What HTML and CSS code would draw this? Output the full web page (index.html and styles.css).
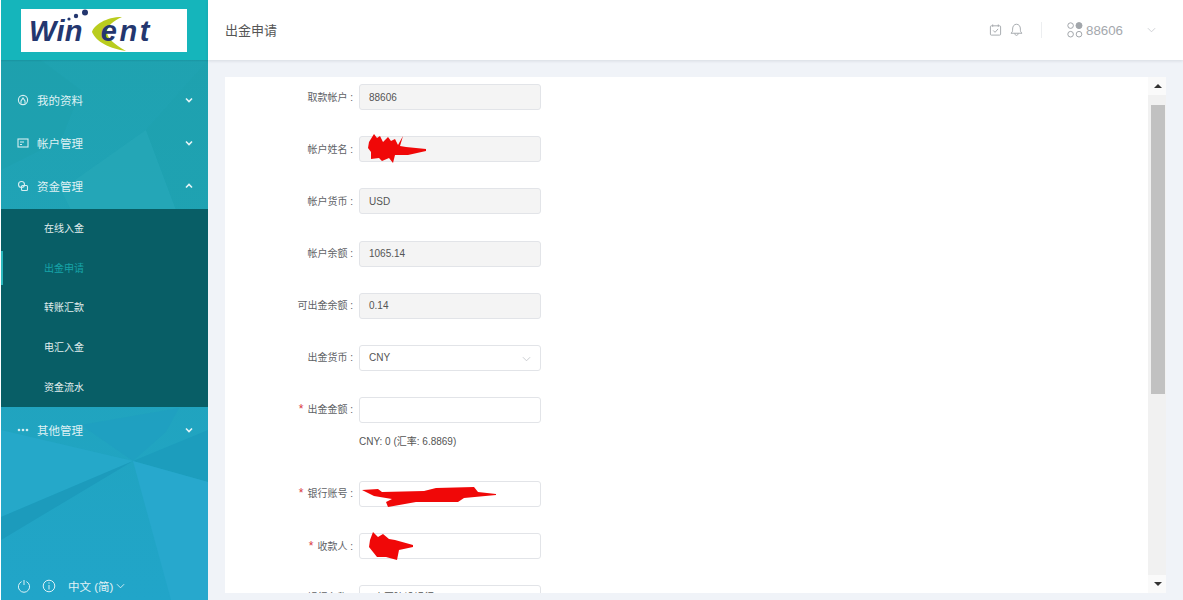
FILE: index.html
```html
<!DOCTYPE html>
<html lang="zh-CN">
<head>
<meta charset="utf-8">
<title>出金申请</title>
<link rel="stylesheet" href="styles.css">
</head>
<body>
<div class="app">
  <aside class="sidebar">
    <svg class="facets" viewBox="0 0 207 600" preserveAspectRatio="none" aria-hidden="true">
      <defs>
        <linearGradient id="sb" x1="0" y1="0" x2="0" y2="1">
          <stop offset="0" stop-color="#1fa2ae"/>
          <stop offset="0.45" stop-color="#20a3b8"/>
          <stop offset="1" stop-color="#21a5c9"/>
        </linearGradient>
      </defs>
      <rect width="207" height="600" fill="url(#sb)"/>
      <polygon points="40,60 80,90 60,140 0,170 0,60" fill="#1d9eaa" opacity=".35"/>
      <polygon points="145,130 175,210 70,210 60,190" fill="#28a9b8" opacity=".55"/>
      <polygon points="207,60 207,210 175,210 145,130" fill="#1ea0ad" opacity=".4"/>
      <polygon points="0,430 132,461 0,517" fill="#27a9ca" opacity=".8"/>
      <polygon points="132,461 207,430 207,482" fill="#1c9dbd"/>
      <polygon points="132,461 80,425 178,408 165,432" fill="#1f9fc0" opacity=".8"/>
      <polygon points="132,461 207,482 207,600 170,600" fill="#27a8cd"/>
      <polygon points="132,461 0,517 0,540" fill="#1c9bbc"/>
      <polygon points="0,0 207,0 207,60 0,60" fill="#15b5bb"/>
    </svg>
    <div class="brand">
      <div class="logo">
        <svg class="logo-art" viewBox="0 0 166 43" aria-hidden="true">
          <path d="M101 8 C85 8 73 16 71 23 C75 33 90 40 105 42 C93 35 86 29 86 23 C86 17 92 12 101 8Z" fill="#b9cc1e"/>
          <circle cx="64" cy="3.5" r="3" fill="#24376f"/>
          <circle cx="55" cy="7" r="2.2" fill="#24376f"/>
          <circle cx="48" cy="10" r="1.6" fill="#24376f"/>
          <circle cx="42" cy="12" r="1.1" fill="#24376f"/>
        </svg>
        <span class="logo-text">Win</span><span class="logo-text logo-text-end">ent</span>
      </div>
    </div>
    <nav class="menu">
      <div class="menu-item">
        <svg class="menu-icon" viewBox="0 0 12 12"><circle cx="6" cy="6" r="4.6"/><path d="M4 9.5 V7 L6 4 L8 7 V9.5"/></svg>
        <span class="menu-label">我的资料</span>
        <svg class="chev" viewBox="0 0 8 6"><path d="M1 1.5 L4 4.5 L7 1.5"/></svg>
      </div>
      <div class="menu-item">
        <svg class="menu-icon" viewBox="0 0 12 12"><rect x="1" y="2" width="10" height="8"/><path d="M3 5 H7 M3 7.5 H5"/></svg>
        <span class="menu-label">帐户管理</span>
        <svg class="chev" viewBox="0 0 8 6"><path d="M1 1.5 L4 4.5 L7 1.5"/></svg>
      </div>
      <div class="menu-item">
        <svg class="menu-icon" viewBox="0 0 12 12"><circle cx="4.5" cy="4.5" r="3"/><rect x="4.5" y="5.5" width="6" height="5" rx="1"/></svg>
        <span class="menu-label">资金管理</span>
        <svg class="chev" viewBox="0 0 8 6"><path d="M1 4.5 L4 1.5 L7 4.5"/></svg>
      </div>
      <div class="submenu">
        <div class="sub-item">在线入金</div>
        <div class="sub-item sub-item-active">出金申请</div>
        <div class="sub-item">转账汇款</div>
        <div class="sub-item">电汇入金</div>
        <div class="sub-item">资金流水</div>
      </div>
      <div class="menu-item">
        <svg class="menu-icon menu-icon-dots" viewBox="0 0 12 12"><circle cx="2" cy="6" r="1.3"/><circle cx="6" cy="6" r="1.3"/><circle cx="10" cy="6" r="1.3"/></svg>
        <span class="menu-label">其他管理</span>
        <svg class="chev" viewBox="0 0 8 6"><path d="M1 1.5 L4 4.5 L7 1.5"/></svg>
      </div>
    </nav>
    <div class="side-foot">
      <svg class="foot-icon" viewBox="0 0 14 14"><path d="M4.6 2.6 A5.6 5.6 0 1 0 9.4 2.6 M7 1 V6"/></svg>
      <svg class="foot-icon" viewBox="0 0 14 14"><circle cx="7" cy="7" r="5.8"/><path d="M7 6 V10.5 M7 3.4 V4.6"/></svg>
      <span class="lang">中文 (简)</span>
      <svg class="lang-chev" viewBox="0 0 10 6"><path d="M1 1 L5 5 L9 1"/></svg>
    </div>
  </aside>

  <div class="main">
    <header class="topbar">
      <div class="page-title">出金申请</div>
      <div class="top-actions">
        <svg class="top-icon" viewBox="0 0 14 14"><rect x="1.5" y="2.5" width="11" height="10" rx="1"/><path d="M4 1 V3.5 M10 1 V3.5 M4.5 7.5 L6.5 9.5 L9.8 5.8"/></svg>
        <svg class="top-icon top-icon-bell" viewBox="0 0 14 14"><path d="M1 10.5 H13 C11.2 9.5 11.2 8 11.2 6 C11.2 2.8 9.5 0.8 7 0.8 C4.5 0.8 2.8 2.8 2.8 6 C2.8 8 2.8 9.5 1 10.5Z M5.2 10.5 C5.2 13.6 8.8 13.6 8.8 10.5"/></svg>
        <span class="top-sep"></span>
        <svg class="user-icon" viewBox="0 0 16 16"><circle cx="3.6" cy="3.6" r="2.8"/><circle cx="12" cy="3.6" r="3" class="user-dot"/><circle cx="3.6" cy="12.2" r="2.8"/><circle cx="12" cy="12.2" r="2.8"/></svg>
        <span class="user-name">88606</span>
        <svg class="top-chev" viewBox="0 0 10 6"><path d="M1 1 L5 5 L9 1"/></svg>
      </div>
    </header>

    <main class="content">
      <section class="card">
        <div class="form">
          <div class="row">
            <label class="label">取款帐户 :</label>
            <div class="field field-off">88606</div>
          </div>
          <div class="row">
            <label class="label">帐户姓名 :</label>
            <div class="field field-off">
              <svg class="scribble scribble-name" viewBox="0 0 58 30"><path d="M1 8 L6 0 L9 4 L12 2 L15 8 L20 3 L23 7 L27 5 L30 11 L35 2 L32 12 L38 13 L58 15 L58 17 L40 21 L27 21 L25 29 L21 24 L14 27 L11 24 L3 25 L3 18 L0 14Z" fill="#f00808"/></svg>
            </div>
          </div>
          <div class="row">
            <label class="label">帐户货币 :</label>
            <div class="field field-off">USD</div>
          </div>
          <div class="row">
            <label class="label">帐户余额 :</label>
            <div class="field field-off">1065.14</div>
          </div>
          <div class="row">
            <label class="label">可出金余额 :</label>
            <div class="field field-off">0.14</div>
          </div>
          <div class="row">
            <label class="label">出金货币 :</label>
            <div class="field">CNY
              <svg class="select-chev" viewBox="0 0 10 6"><path d="M1 1 L5 5 L9 1"/></svg>
            </div>
          </div>
          <div class="row row-tight">
            <label class="label"><span class="req">*</span>出金金额 :</label>
            <div class="field"></div>
          </div>
          <div class="hint">CNY: 0 (汇率: 6.8869)</div>
          <div class="row">
            <label class="label"><span class="req">*</span>银行账号 :</label>
            <div class="field">
              <svg class="scribble scribble-bank" viewBox="0 0 134 20"><path d="M0 3 L16 2 L20 5 L62 4 L74 1 L112 0 L116 5 L134 7 L134 8 L102 11 L96 15 L54 15 L26 20 L24 15 L30 12 L12 9Z" fill="#f00808"/></svg>
            </div>
          </div>
          <div class="row">
            <label class="label"><span class="req">*</span>收款人 :</label>
            <div class="field">
              <svg class="scribble scribble-payee" viewBox="0 0 44 28"><path d="M4 0 L9 5 L14 2 L20 7 L26 8 L44 13 L44 15 L30 18 L28 28 L17 25 L8 25 L4 20 L0 15 L1 8Z" fill="#f00808"/></svg>
            </div>
          </div>
          <div class="row row-last">
            <label class="label">银行名称 :</label>
            <div class="field">中国建设银行</div>
          </div>
        </div>
        <div class="scrollbar">
          <span class="sb-arrow sb-arrow-up"></span>
          <div class="sb-track"><div class="sb-thumb"></div></div>
          <span class="sb-arrow sb-arrow-down"></span>
        </div>
      </section>
    </main>
  </div>
</div>
</body>
</html>
```
FILE: styles.css
```css
* { box-sizing: border-box; }
html, body { margin: 0; height: 100%; overflow: hidden; background: #fff; }
body { font-family: "Liberation Sans", "Noto Sans CJK SC", sans-serif; color: #606266; }

.app { display: flex; height: 600px; padding-left: 1px; }

/* Sidebar */
.sidebar { position: relative; width: 207px; flex: none; display: flex; flex-direction: column; color: #e4f3f5; overflow: hidden; }
.facets { position: absolute; inset: 0; width: 100%; height: 100%; }
.brand { position: relative; height: 60px; flex: none; padding: 9px 21px 8px 20px; box-shadow: 0 1px 1px rgba(0,80,90,.12); }
.logo { position: relative; height: 43px; background: #fff; display: flex; align-items: center; padding: 2px 0 0 8px; }
.logo-art { position: absolute; inset: 0; width: 100%; height: 100%; }
.logo-text { position: relative; font-family: "Liberation Sans", sans-serif; font-weight: 700; font-style: italic; font-size: 29px; letter-spacing: .3px; color: #24376f; line-height: 1; }
.logo-text-end { margin-left: 18px; font-size: 29px; letter-spacing: 2.5px; }

.menu { position: relative; padding-top: 18px; flex: 1; }
.menu-item { display: flex; align-items: center; height: 43px; padding: 0 15px 0 16px; }
.menu-icon { width: 12px; height: 12px; margin-right: 8px; fill: none; stroke: #d6eef1; stroke-width: 1.1; flex: none; }
.menu-icon-dots { fill: #d6eef1; stroke: none; }
.menu-label { flex: 1; font-size: 11.5px; color: #dff1f4; }
.chev { width: 8px; height: 6px; fill: none; stroke: #e6f5f7; stroke-width: 1.6; }

.submenu { background: #085e66; height: 198px; margin: 1.5px 0 2px; display: flex; flex-direction: column; }
.sub-item { position: relative; height: 39.6px; display: flex; align-items: center; padding: 0 0 1px 43px; font-size: 10px; color: #e2eeef; }
.sub-item-active { color: #17a3a8; }
.sub-item-active::before { content: ""; position: absolute; left: 0; top: 3px; bottom: 3px; width: 1.5px; background: #2cb8bd; }

.side-foot { position: relative; flex: none; height: 28px; display: flex; align-items: center; padding: 0 0 0 16px; }
.foot-icon { width: 14px; height: 14px; fill: none; stroke: #dcf1f6; stroke-width: 1; margin-right: 11px; flex: none; }
.lang { font-size: 11.5px; color: #e2f2f6; margin-left: 1px; }
.lang-chev { width: 9px; height: 6px; margin-left: 3px; fill: none; stroke: #dcf1f6; stroke-width: 1; }

/* Main */
.main { flex: 1; min-width: 0; display: flex; flex-direction: column; background: #f0f3f8; }
.topbar { height: 60px; flex: none; background: #fff; display: flex; align-items: center; justify-content: space-between; padding: 0 27px 0 17px; box-shadow: 0 1px 3px rgba(60,70,90,.14); position: relative; }
.page-title { font-size: 13px; color: #555; margin-bottom: 2px; }
.top-actions { display: flex; align-items: center; }
.top-icon { width: 13px; height: 14px; fill: none; stroke: #a2a6ab; stroke-width: 1; }
.top-icon-bell { margin-left: 8px; }
.top-sep { width: 1px; height: 16px; background: #eceef0; margin: 0 25px 0 18px; }
.user-icon { width: 16px; height: 16px; fill: none; stroke: #a2a6ab; stroke-width: 1; }
.user-dot { fill: #a2a6ab; }
.user-name { font-size: 13.3px; color: #a4a8ad; margin-left: 3px; }
.top-chev { width: 9px; height: 6px; margin-left: 24px; fill: none; stroke: #c9ccd0; stroke-width: 1; }

.content { flex: 1; min-height: 0; padding: 16.5px 17px 7px 17px; }
.card { height: 100%; background: #fff; display: flex; overflow: hidden; }
.form { flex: 1; min-width: 0; padding-top: 7.9px; overflow: hidden; }

.row { display: flex; align-items: center; height: 26px; margin-bottom: 26.05px; }
.row-tight { margin-bottom: 0; }
.label { width: 128px; flex: none; text-align: right; font-size: 10px; color: #606266; white-space: nowrap; margin-bottom: 2px; }
.req { color: #d9363e; font-size: 12px; margin-right: 4px; }
.field { position: relative; width: 182px; height: 26px; margin-left: 6px; padding: 0 9px; display: flex; align-items: center; border: 1px solid #e2e4e8; border-radius: 3px; background: #fff; font-size: 10px; color: #555; }
.field-off { background: #f4f4f4; }
.select-chev { position: absolute; right: 9px; top: 10px; width: 9px; height: 6px; fill: none; stroke: #c4c7cc; stroke-width: 1; }
.row-last { align-items: flex-start; }
.row-last .label { padding-top: 4px; }
.row-last .field { align-items: flex-start; padding-top: 3px; padding-left: 14px; }

.hint { margin-left: 134px; padding: 13px 0 33.3px; font-size: 10px; line-height: 12px; color: #555; }

.scribble { position: absolute; }
.scribble-name { left: 8px; top: -3px; width: 58px; height: 30px; }
.scribble-bank { left: 2px; top: 5px; width: 134px; height: 20px; }
.scribble-payee { left: 9px; top: -2px; width: 44px; height: 28px; }

/* Scrollbar */
.scrollbar { width: 18px; flex: none; display: flex; flex-direction: column; align-items: center; background: #f1f1f1; }
.sb-arrow { flex: none; width: 100%; height: 18px; position: relative; background: #fafafa; }
.sb-arrow::after { content: ""; position: absolute; left: 6px; top: 7px; border-left: 4px solid transparent; border-right: 4px solid transparent; }
.sb-arrow-up::after { border-bottom: 4px solid #333; }
.sb-arrow-down::after { border-top: 4px solid #333; }
.sb-track { flex: 1; width: 100%; padding: 10px 1px 0 3px; }
.sb-thumb { height: 289px; background: #c1c1c1; }
```
